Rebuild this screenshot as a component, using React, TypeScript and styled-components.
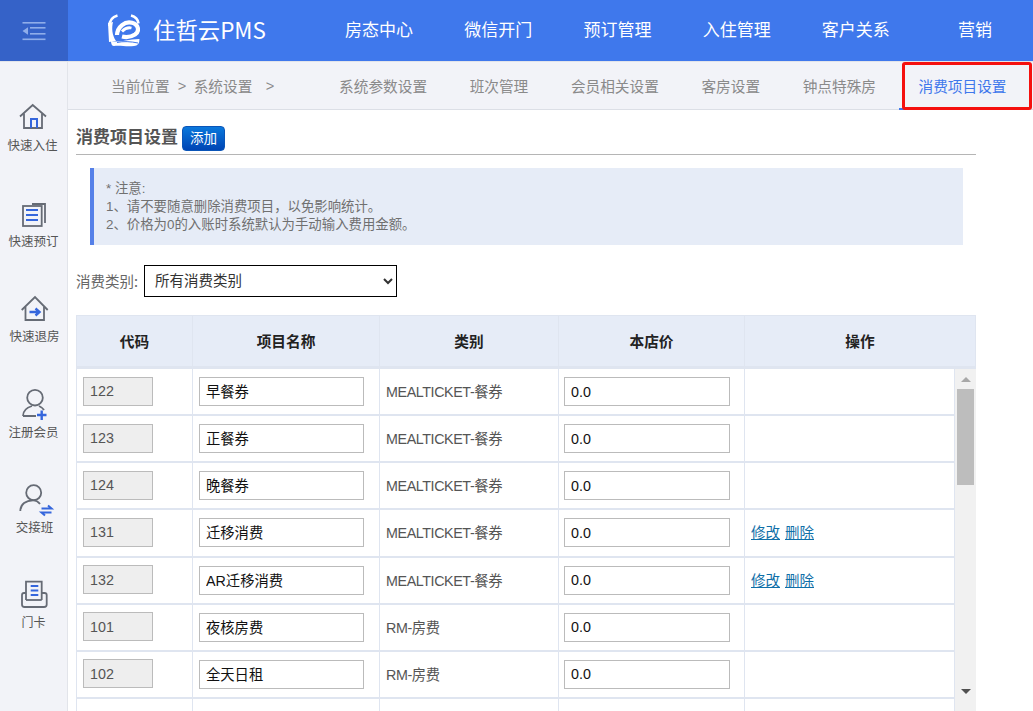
import React from "react";
import styled, { createGlobalStyle } from "styled-components";

const FONT = `"Liberation Sans", "Noto Sans CJK SC", sans-serif`;
const CJK = `"Noto Sans CJK SC", "Noto Sans", sans-serif`;

const Global = createGlobalStyle`
  html, body { margin: 0; padding: 0; height: 100%; overflow: hidden; background: #fff; }
  * { box-sizing: border-box; }
  body { font-family: ${FONT}; }
`;

const Page = styled.div`
  position: relative;
  width: 1033px;
  height: 711px;
  display: flex;
  flex-direction: column;
  overflow: hidden;
`;

const Header = styled.header`
  height: 61px;
  flex: none;
  display: flex;
  align-items: center;
  background: #3f78ec;
  color: #fff;
`;
const MenuToggle = styled.div`
  width: 68px;
  height: 100%;
  flex: none;
  display: flex;
  align-items: center;
  justify-content: center;
  background: #3562c8;
`;
const Brand = styled.div`
  width: 251.5px;
  flex: none;
  display: flex;
  align-items: center;
  gap: 14px;
  padding-left: 40px;
`;
const BrandName = styled.span`
  font-family: ${CJK};
  font-size: 22.4px;
  line-height: 30px;
  margin-top: -4px;
  margin-left: -1px;
  white-space: nowrap;
`;
const Nav = styled.nav`
  flex: 1;
  display: grid;
  grid-template-columns: repeat(6, 119.2px);
`;
const NavItem = styled.a`
  font-family: ${CJK};
  font-size: 17px;
  line-height: 24px;
  margin-top: -4px;
  text-align: center;
  color: #fff;
`;

const Body = styled.div`
  flex: 1;
  min-height: 0;
  display: flex;
`;
const Sidebar = styled.aside`
  width: 68px;
  flex: none;
  background: #f2f3f8;
  border-right: 1px solid #e2e4ea;
  border-top: 1px solid #e2e4ea;
  display: flex;
  flex-direction: column;
`;
const SideItem = styled.a`
  height: 95.4px;
  flex: none;
  display: flex;
  flex-direction: column;
  align-items: center;
  justify-content: flex-end;
  padding-bottom: 2px;
  color: #555;
`;
const SideIcon = styled.svg`
  width: 40px;
  height: 34px;
  flex: none;
  overflow: visible;
  fill: none;
  stroke: #666b75;
  stroke-width: 1.8;
`;
const SideLabel = styled.span<{ $size?: number; $shift?: number }>`
  font-family: ${CJK};
  font-size: ${(p) => p.$size ?? 12.5}px;
  line-height: 20px;
  margin-left: ${(p) => (p.$shift ?? 0) * 2}px;
  white-space: nowrap;
  color: #555;
`;

const Main = styled.main`
  flex: 1;
  min-width: 0;
  display: flex;
  flex-direction: column;
`;
const SubNav = styled.div`
  height: 49px;
  flex: none;
  display: flex;
  align-items: stretch;
  background: #f2f3f8;
  border-bottom: 1px solid #dcdfe6;
  border-top: 1px solid #e2e4ea;
  font-family: ${CJK};
  font-size: 14.67px;
  color: #8a8a8a;
`;
const Crumbs = styled.div`
  width: 249.8px;
  flex: none;
  padding-left: 43px;
  display: flex;
  align-items: center;
  white-space: nowrap;
`;
const CrumbSep = styled.span<{ $wide?: boolean }>`
  font-family: ${FONT};
  margin: 0 ${(p) => (p.$wide ? 0 : 7.5)}px 0 ${(p) => (p.$wide ? 13.5 : 8)}px;
`;
const Tab = styled.a<{ $active?: boolean }>`
  display: flex;
  align-items: center;
  padding: 0 21.3px;
  white-space: nowrap;
  color: ${(p) => (p.$active ? "#3f78ec" : "#8a8a8a")};
  border-bottom: 2px solid ${(p) => (p.$active ? "#3f78ec" : "transparent")};
  margin-bottom: -1px;
  margin-left: ${(p) => (p.$active ? 2 : 0)}px;
  padding-left: ${(p) => (p.$active ? 19.3 : 21.3)}px;
`;
const Highlight = styled.div`
  position: absolute;
  left: 902px;
  top: 62px;
  width: 130px;
  height: 48px;
  border: 3px solid #f5100e;
  border-radius: 3px;
`;

const Content = styled.section`
  flex: 1;
  min-height: 0;
  padding: 16px 57px 0 8px;
  display: flex;
  flex-direction: column;
  background: #fff;
`;
const TitleBar = styled.div`
  height: 29px;
  flex: none;
  display: flex;
  align-items: flex-start;
  gap: 4px;
  border-bottom: 1px solid #b5b5b5;
`;
const Title = styled.h2`
  margin: 0;
  font-family: ${CJK};
  font-size: 17px;
  line-height: 20px;
  font-weight: 700;
  color: #555;
`;
const AddButton = styled.button`
  width: 43px;
  height: 25px;
  padding: 0 0 3px;
  border: 1px solid #0a55b8;
  border-radius: 4px;
  background: linear-gradient(#0a78dc, #0045b4);
  color: #fff;
  font-family: ${CJK};
  font-size: 13.5px;
  line-height: 20px;
`;
const Notice = styled.div`
  height: 77px;
  flex: none;
  margin: 13px 13px 0 14px;
  padding: 12px 12px 0;
  background: #e6ecf7;
  border-left: 4px solid #5580e8;
  font-family: ${FONT};
  font-size: 13.4px;
  line-height: 18px;
  color: #707070;
`;
const Filter = styled.div`
  height: 32px;
  flex: none;
  margin-top: 20px;
  display: flex;
  align-items: center;
  gap: 6px;
  font-family: ${CJK};
  font-size: 14.5px;
  color: #666;
`;
const FilterLabel = styled.span`
  margin-top: -2px;
`;
const Select = styled.select`
  width: 253px;
  height: 32px;
  padding: 0 0 3px 6px;
  border: 1px solid #000;
  border-radius: 0;
  background: #fff;
  color: #333;
  font-family: ${CJK};
  font-size: 14.5px;
`;
const Table = styled.div`
  flex: 1;
  min-height: 0;
  margin-top: 18px;
  display: flex;
  flex-direction: column;
  border-left: 1px solid #dfe5f0;
`;
const HeadRow = styled.div`
  height: 54px;
  flex: none;
  display: grid;
  grid-template-columns: 116px 187px 179px 186px 1fr;
  background: #e6ecf7;
  border-top: 1px solid #dfe5f0;
  border-bottom: 3px solid #dfe5f0;
`;
const HeadCell = styled.div`
  display: flex;
  align-items: center;
  justify-content: center;
  padding-bottom: 2px;
  border-right: 1px solid #dfe5f0;
  font-family: ${CJK};
  font-size: 14.67px;
  font-weight: 700;
  color: #222;
`;
const TableBody = styled.div`
  flex: 1;
  min-height: 0;
  display: flex;
`;
const Rows = styled.div`
  flex: 1;
  min-width: 0;
`;
const Row = styled.div`
  height: 47.14px;
  display: grid;
  grid-template-columns: 116px 187px 179px 186px 1fr;
  border-bottom: 2px solid #dfe5f0;
`;
const Cell = styled.div`
  display: flex;
  align-items: center;
  padding-left: 6px;
  border-right: 1px solid #dfe5f0;
  gap: 5px;
  white-space: nowrap;
`;
const TypeText = styled.span`
  font-family: ${FONT}, ${CJK};
  font-size: 14.3px;
  letter-spacing: -0.4px;
  margin-top: -2px;
  color: #555;
`;
const Input = styled.input<{ $width: number }>`
  width: ${(p) => p.$width}px;
  height: 29px;
  padding: 0 6px;
  border: 1px solid #bbb;
  border-radius: 0;
  background: #fff;
  color: #111;
  font-family: ${FONT}, ${CJK};
  font-size: 14.3px;
  outline: none;
`;
const NameInput = styled(Input)`
  padding-bottom: 2px;
`;
const CodeInput = styled(Input)`
  background: #eee;
  color: #555;
  margin-top: -1px;
`;
const PriceInput = styled(Input)`
  margin-left: -1px;
`;
const OpLink = styled.a`
  color: #0f6fa8;
  text-decoration: underline;
  font-family: ${CJK};
  font-size: 14.5px;
  margin-top: -2px;
`;
const ScrollTrack = styled.div`
  width: 21px;
  flex: none;
  background: #f1f1f1;
  display: flex;
  flex-direction: column;
  align-items: center;
`;
const ScrollArrow = styled.svg<{ $dark?: boolean }>`
  width: 10px;
  height: 5px;
  flex: none;
  fill: ${(p) => (p.$dark ? "#505050" : "#a8a8a8")};
`;
const ScrollThumb = styled.div`
  width: 17px;
  height: 96px;
  flex: none;
  margin: 7px 0 204px;
  background: #bdbdbd;
`;

const Logo = () => (
  <svg width="32" height="33" viewBox="0 0 32 33" style={{ flex: "none" }}>
    <path d="M1.5 12 C1.5 7 4 3 9.5 1.5" fill="none" stroke="#fff" strokeWidth="2.6" />
    <path d="M23 1.5 C27 2.5 30 5.5 30.5 9.5" fill="none" stroke="#fff" strokeWidth="2.6" />
    <path d="M0 9 L5 8 C3.5 14 4 21 8 27 L1 28 Z" fill="#fff" />
    <path
      d="M9 21 C9.5 12.5 17 7 24 8.8 C30.5 10.5 32 17 27 20.5 C23 23 18 23.5 14 22.5"
      fill="none"
      stroke="#fff"
      strokeWidth="4.2"
    />
    <path d="M14 17.5 C16.5 14.8 20 13.2 23.5 14" fill="none" stroke="#fff" strokeWidth="2.8" />
    <path d="M3 27 C10 29 18 25.5 31.5 25 Q31.5 32 26 32 C18 33 12 31 6 32 Q3 32 3 27 Z" fill="#fff" />
    <path d="M9 28.5 C15 27 23 27.5 30 29" fill="none" stroke="#3f78ec" strokeWidth="1" />
  </svg>
);

const rows: { code: string; name: string; type: string; ops: boolean }[] = [
  { code: "122", name: "早餐券", type: "MEALTICKET-餐券", ops: false },
  { code: "123", name: "正餐券", type: "MEALTICKET-餐券", ops: false },
  { code: "124", name: "晚餐券", type: "MEALTICKET-餐券", ops: false },
  { code: "131", name: "迁移消费", type: "MEALTICKET-餐券", ops: true },
  { code: "132", name: "AR迁移消费", type: "MEALTICKET-餐券", ops: true },
  { code: "101", name: "夜核房费", type: "RM-房费", ops: false },
  { code: "102", name: "全天日租", type: "RM-房费", ops: false },
];

const BLUE = "#3566dc";

const sideItems: { label: string; size?: number; shift?: number; icon: React.ReactNode }[] = [
  {
    label: "快速入住",
    shift: -1,
    icon: (
      <>
        <path d="M6 15.5 L18.7 4 L32 15.5" />
        <path d="M10 12.5 V27 H28 V12.5" />
        <path d="M17 27 V18 H23 V27" stroke={BLUE} strokeWidth="2" />
      </>
    ),
  },
  {
    label: "快速预订",
    icon: (
      <>
        <rect x="9" y="9" width="18.7" height="20" />
        <path d="M18 7 H31 V26" />
        <path d="M12 13 H24 M12 18 H24 M12 23 H24" stroke={BLUE} strokeWidth="2" />
      </>
    ),
  },
  {
    label: "快速退房",
    shift: 1,
    icon: (
      <>
        <path d="M7.7 18 L21 5 L33.7 18" />
        <path d="M11.5 15 V28 H30 V15" />
        <path d="M15.5 20 H25 M21.5 16.5 L25.5 20 L21.5 23.5" stroke={BLUE} strokeWidth="2.4" />
      </>
    ),
  },
  {
    label: "注册会员",
    icon: (
      <>
        <circle cx="21" cy="9.7" r="7.8" />
        <path d="M9 28 C9 22 13 19.5 18 18 M25 18 C27 19 29 20 30 22 M9 28 H22" />
        <path d="M23 27 H32.5 M27.7 22.5 V32" stroke={BLUE} strokeWidth="2.4" />
      </>
    ),
  },
  {
    label: "交接班",
    shift: 1,
    icon: (
      <>
        <circle cx="19.7" cy="9.7" r="7.5" />
        <path d="M6.3 28 C6.5 21 12 17.3 19 17.3 C22 17.3 24 18.3 26 21" />
        <path d="M27.5 25.5 H37.5 L34 22.5 M37.5 29.5 H27.5 L31 32.5" stroke={BLUE} strokeWidth="2" />
      </>
    ),
  },
  {
    label: "门卡",
    size: 12,
    icon: (
      <>
        <path d="M12 22 V3.7 H27.7 V22" />
        <path d="M12 15 H10 Q8 15 8 17 V26.5 Q8 29 10.5 29 H30 Q32.7 29 32.7 26.5 V17 Q32.7 15 30.5 15 H27.7" />
        <path d="M12 22 H27.7" />
        <path d="M16.7 8 H24.3 M16.7 12.5 H24.3 M16.7 17 H24.3" stroke={BLUE} strokeWidth="2" />
      </>
    ),
  },
];

const navItems = ["房态中心", "微信开门", "预订管理", "入住管理", "客户关系", "营销"];
const tabs = ["系统参数设置", "班次管理", "会员相关设置", "客房设置", "钟点特殊房", "消费项目设置"];

export default function App() {
  return (
    <Page>
      <Global />
      <Header>
        <MenuToggle>
          <svg width="24" height="20" viewBox="0 0 24 20" fill="#8fadea">
            <rect x="0.5" y="1" width="23" height="1.6" />
            <rect x="8" y="6" width="15.5" height="1.6" />
            <rect x="8" y="12" width="15.5" height="1.6" />
            <rect x="0.5" y="17.5" width="23" height="1.6" />
            <path d="M0.5 10 L6 6.2 V13.8 Z" />
          </svg>
        </MenuToggle>
        <Brand>
          <Logo />
          <BrandName>住哲云PMS</BrandName>
        </Brand>
        <Nav>
          {navItems.map((n) => (
            <NavItem key={n}>{n}</NavItem>
          ))}
        </Nav>
      </Header>
      <Body>
        <Sidebar>
          {sideItems.map((s) => (
            <SideItem key={s.label}>
              <SideIcon viewBox="0 0 40 34">{s.icon}</SideIcon>
              <SideLabel $size={s.size} $shift={s.shift}>
                {s.label}
              </SideLabel>
            </SideItem>
          ))}
        </Sidebar>
        <Main>
          <SubNav>
            <Crumbs>
              当前位置<CrumbSep>&gt;</CrumbSep>系统设置<CrumbSep $wide>&gt;</CrumbSep>
            </Crumbs>
            {tabs.map((t, i) => (
              <Tab key={t} $active={i === tabs.length - 1}>
                {t}
              </Tab>
            ))}
          </SubNav>
          <Content>
            <TitleBar>
              <Title>消费项目设置</Title>
              <AddButton>添加</AddButton>
            </TitleBar>
            <Notice>
              * 注意:
              <br />
              1、请不要随意删除消费项目，以免影响统计。
              <br />
              2、价格为0的入账时系统默认为手动输入费用金额。
            </Notice>
            <Filter>
              <FilterLabel>消费类别:</FilterLabel>
              <Select defaultValue="all">
                <option value="all">所有消费类别</option>
              </Select>
            </Filter>
            <Table>
              <HeadRow>
                <HeadCell>代码</HeadCell>
                <HeadCell>项目名称</HeadCell>
                <HeadCell>类别</HeadCell>
                <HeadCell>本店价</HeadCell>
                <HeadCell>操作</HeadCell>
              </HeadRow>
              <TableBody>
                <Rows>
                  {rows.map((r) => (
                    <Row key={r.code}>
                      <Cell>
                        <CodeInput $width={70} defaultValue={r.code} disabled />
                      </Cell>
                      <Cell>
                        <NameInput $width={165} defaultValue={r.name} />
                      </Cell>
                      <Cell>
                        <TypeText>{r.type}</TypeText>
                      </Cell>
                      <Cell>
                        <PriceInput $width={166} defaultValue="0.0" />
                      </Cell>
                      <Cell>
                        {r.ops && (
                          <>
                            <OpLink>修改</OpLink>
                            <OpLink>删除</OpLink>
                          </>
                        )}
                      </Cell>
                    </Row>
                  ))}
                  <Row>
                    <Cell />
                    <Cell />
                    <Cell />
                    <Cell />
                    <Cell />
                  </Row>
                </Rows>
                <ScrollTrack>
                  <ScrollArrow viewBox="0 0 10 5" style={{ marginTop: 8 }}>
                    <path d="M5 0 L10 5 H0 Z" />
                  </ScrollArrow>
                  <ScrollThumb />
                  <ScrollArrow $dark viewBox="0 0 10 5">
                    <path d="M0 0 H10 L5 5 Z" />
                  </ScrollArrow>
                </ScrollTrack>
              </TableBody>
            </Table>
          </Content>
        </Main>
      </Body>
      <Highlight />
    </Page>
  );
}
